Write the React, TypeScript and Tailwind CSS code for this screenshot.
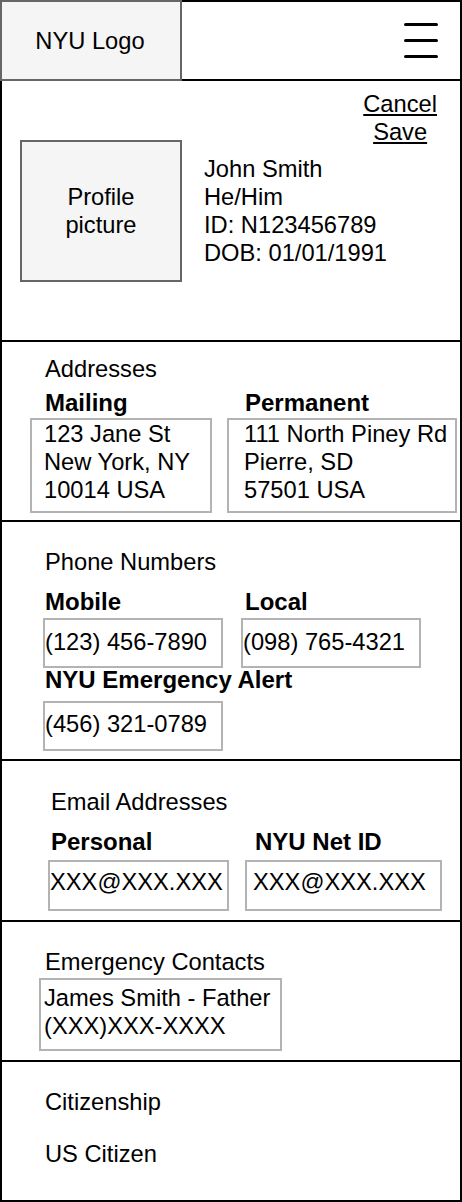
import React from "react";

export default function App() {
  return (
    <div className="w-[462px] h-[1202px] bg-white text-black font-['Liberation_Sans',Arial,sans-serif] text-[23.7px] leading-[28px] flex flex-col">
      {/* Header */}
      <div className="flex h-[81px] shrink-0">
        <div className="w-[182px] h-full border-2 border-[#666666] bg-[#f5f5f5] flex items-center justify-center pr-[2px]">
          NYU Logo
        </div>
        <div className="flex-1 h-full border-y-2 border-r-2 border-black flex items-center justify-end pr-[22px]">
          <svg width="34" height="35" viewBox="0 0 34 35" aria-label="menu">
            <line x1="1.5" y1="1.5" x2="32.5" y2="1.5" stroke="black" strokeWidth="3" strokeLinecap="round" />
            <line x1="1.5" y1="17.5" x2="32.5" y2="17.5" stroke="black" strokeWidth="3" strokeLinecap="round" />
            <line x1="1.5" y1="33.5" x2="32.5" y2="33.5" stroke="black" strokeWidth="3" strokeLinecap="round" />
          </svg>
        </div>
      </div>

      {/* Body */}
      <div className="flex-1 flex flex-col border-x-2 border-b-2 border-black">
        {/* Profile */}
        <section className="h-[261px] shrink-0 border-b-2 border-black flex flex-col">
          <div className="flex justify-end pt-[9px] pr-[23px]">
            <div className="flex flex-col items-center">
              <span className="underline">Cancel</span>
              <span className="underline">Save</span>
            </div>
          </div>
          <div className="flex items-center -mt-[6px] pl-[18px]">
            <div className="w-[162px] h-[142px] border-2 border-[#666666] bg-[#f5f5f5] flex items-center justify-center text-center">
              Profile
              <br />
              picture
            </div>
            <div className="ml-[22px] flex flex-col">
              <span>John Smith</span>
              <span>He/Him</span>
              <span>ID: N123456789</span>
              <span>DOB: 01/01/1991</span>
            </div>
          </div>
        </section>

        {/* Addresses */}
        <section className="h-[180px] shrink-0 border-b-2 border-black pt-[13px] pl-[43px]">
          <div>Addresses</div>
          <div className="mt-[6px] flex">
            <div className="w-[200px] flex flex-col">
              <div className="font-bold text-[24px]">Mailing</div>
              <div className="mt-[1px] -ml-[15px] w-[182px] h-[95px] border-2 border-[#b3b3b3] pl-[12px]">
                123 Jane St
                <br />
                New York, NY
                <br />
                10014 USA
              </div>
            </div>
            <div className="flex flex-col">
              <div className="font-bold text-[24px]">Permanent</div>
              <div className="mt-[1px] -ml-[18px] w-[230px] h-[95px] border-2 border-[#b3b3b3] pl-[15px] whitespace-nowrap">
                111 North Piney Rd
                <br />
                Pierre, SD
                <br />
                57501 USA
              </div>
            </div>
          </div>
        </section>

        {/* Phone Numbers */}
        <section className="h-[239px] shrink-0 border-b-2 border-black pt-[26px] pl-[43px]">
          <div>Phone Numbers</div>
          <div className="mt-[12px] flex">
            <div className="w-[200px] flex flex-col">
              <div className="font-bold text-[24px]">Mobile</div>
              <div className="mt-[2px] -ml-[2px] w-[180px] h-[50px] border-2 border-[#b3b3b3] pt-[8px] whitespace-nowrap">
                (123) 456-7890
              </div>
            </div>
            <div className="flex flex-col">
              <div className="font-bold text-[24px]">Local</div>
              <div className="mt-[2px] -ml-[4px] w-[180px] h-[50px] border-2 border-[#b3b3b3] pt-[8px] whitespace-nowrap">
                (098) 765-4321
              </div>
            </div>
          </div>
          <div className="-mt-[2px] font-bold text-[24px]">NYU Emergency Alert</div>
          <div className="mt-[7px] -ml-[2px] w-[180px] h-[50px] border-2 border-[#b3b3b3] pt-[7px] whitespace-nowrap">
            (456) 321-0789
          </div>
        </section>

        {/* Email Addresses */}
        <section className="h-[161px] shrink-0 border-b-2 border-black pt-[27px] pl-[49px]">
          <div>Email Addresses</div>
          <div className="mt-[12px] flex">
            <div className="w-[204px] flex flex-col">
              <div className="font-bold text-[24px]">Personal</div>
              <div className="mt-[4px] -ml-[3px] w-[181px] h-[51px] border-2 border-[#b3b3b3] pt-[6px] whitespace-nowrap">
                XXX@XXX.XXX
              </div>
            </div>
            <div className="flex flex-col">
              <div className="font-bold text-[24px]">NYU Net ID</div>
              <div className="mt-[4px] -ml-[10px] w-[197px] h-[51px] border-2 border-[#b3b3b3] pt-[6px] pl-[6px] whitespace-nowrap">
                XXX@XXX.XXX
              </div>
            </div>
          </div>
        </section>

        {/* Emergency Contacts */}
        <section className="h-[140px] shrink-0 border-b-2 border-black pt-[26px] pl-[43px]">
          <div>Emergency Contacts</div>
          <div className="mt-[2px] -ml-[6px] w-[243px] h-[73px] border-2 border-[#b3b3b3] pt-[4px] pl-[3px] whitespace-nowrap">
            James Smith - Father
            <br />
            (XXX)XXX-XXXX
          </div>
        </section>

        {/* Citizenship */}
        <section className="flex-1 pt-[26px] pl-[43px]">
          <div>Citizenship</div>
          <div className="mt-[24px]">US Citizen</div>
        </section>
      </div>
    </div>
  );
}
